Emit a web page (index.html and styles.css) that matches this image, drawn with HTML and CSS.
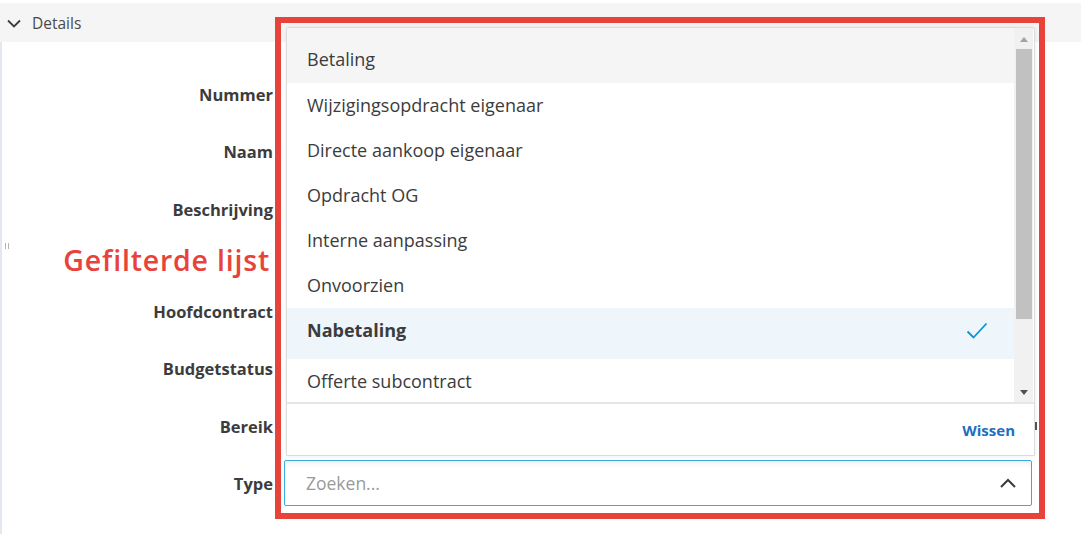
FILE: index.html
```html
<!DOCTYPE html>
<html lang="nl">
<head>
<meta charset="utf-8">
<title>Details</title>
<link rel="stylesheet" href="styles.css">
</head>
<body>
<div class="page">
  <div class="header">
    <svg class="chev" width="14" height="10" viewBox="0 0 14 10"><path d="M1 2.5 L7 8.5 L13 2.5" fill="none" stroke="#3c3c3c" stroke-width="1.8"/></svg>
    <span class="header-title">Details</span>
  </div>
  <div class="form">
    <span class="grip"><i></i><i></i></span>
    <div class="row"><div class="label">Nummer</div></div>
    <div class="row"><div class="label">Naam</div></div>
    <div class="row"><div class="label">Beschrijving</div></div>
    <div class="note-row"><div class="note">Gefilterde lijst</div></div>
    <div class="row"><div class="label">Hoofdcontract</div></div>
    <div class="row"><div class="label">Budgetstatus</div></div>
    <div class="row"><div class="label">Bereik</div><div class="field-edge"></div></div>
    <div class="row">
      <div class="label">Type</div>
      <div class="combo">
        <span class="placeholder">Zoeken...</span>
        <svg class="up" width="18" height="12" viewBox="0 0 18 12"><path d="M2 10 L9 3 L16 10" fill="none" stroke="#3c3c3c" stroke-width="2"/></svg>
      </div>
    </div>
  </div>

  <div class="popup">
    <div class="list-wrap">
      <ul class="list">
        <li class="item first hover">Betaling</li>
        <li class="item">Wijzigingsopdracht eigenaar</li>
        <li class="item">Directe aankoop eigenaar</li>
        <li class="item">Opdracht OG</li>
        <li class="item">Interne aanpassing</li>
        <li class="item">Onvoorzien</li>
        <li class="item selected">Nabetaling
          <svg class="check" width="22" height="18" viewBox="0 0 22 18"><path d="M1.5 9.5 L7.5 15.5 L20.5 1.5" fill="none" stroke="#0696d7" stroke-width="1.8"/></svg>
        </li>
        <li class="item">Offerte subcontract</li>
      </ul>
      <div class="scrollbar">
        <span class="arrow-up"></span>
        <span class="thumb"></span>
        <span class="arrow-down"></span>
      </div>
    </div>
    <div class="footer"><a class="clear">Wissen</a></div>
  </div>

  <div class="annot-box"></div>
</div>
</body>
</html>
```

FILE: styles.css
```css
* { box-sizing: border-box; }
html, body { margin: 0; padding: 0; }
body {
  background: #ffffff;
  font-family: "Open Sans", "Noto Sans", sans-serif;
  color: #3c3c3c;
  width: 1081px;
  height: 534px;
  overflow: hidden;
}
.page {
  position: relative;
  width: 1081px;
  height: 534px;
  padding-top: 3px;
}
.header {
  height: 39px;
  background: #f5f5f5;
  display: flex;
  align-items: center;
  padding-left: 7px;
  gap: 11px;
}
.chev { display: block; margin-top: 0; }
.header-title {
  font-size: 15.5px;
  color: #4a4a4a;
  font-weight: 500;
}
.form {
  position: relative;
  border-left: 2px solid #e3e8ee;
  height: 492px;
  padding-top: 24px;
}
.grip {
  position: absolute;
  left: 3px;
  top: 201px;
  display: flex;
  gap: 2px;
}
.grip i {
  display: block;
  width: 1px;
  height: 6px;
  background: #b5b5b5;
}
.row {
  height: 57.3px;
  display: flex;
  align-items: center;
  gap: 11px;
  position: relative;
}
.label {
  width: 271px;
  text-align: right;
  font-weight: 700;
  font-size: 16.5px;
  color: #3c3c3c;
  letter-spacing: 0;
}
.note-row {
  height: 45px;
  display: flex;
  align-items: center;
}
.note {
  width: 268px;
  text-align: right;
  color: #e8433b;
  font-size: 28.5px;
  font-weight: 600;
  letter-spacing: 0.8px;
}
.field-edge {
  position: absolute;
  left: 1033px;
  top: 25px;
  width: 2px;
  height: 8px;
  background: #555;
}
.combo {
  width: 748px;
  height: 46px;
  border: 1.5px solid #38abdf;
  border-radius: 2px;
  box-shadow: inset 0 5px 6px -3px rgba(0,0,0,0.08);
  display: flex;
  align-items: center;
  justify-content: space-between;
  padding: 0 14px 0 21px;
  background: #fff;
}
.placeholder {
  font-size: 17.5px;
  color: #9a9a9a;
}
.up { display: block; }

.popup {
  position: absolute;
  left: 286px;
  top: 27px;
  width: 749px;
  height: 429px;
  background: #fff;
  border: 1px solid #dcdcdc;
  border-radius: 3px 3px 0 0;
  box-shadow: 0 0 4px rgba(0,0,0,0.08);
  display: flex;
  flex-direction: column;
  overflow: hidden;
}
.list-wrap {
  height: 376px;
  display: flex;
  border-bottom: 2px solid #e6e6e6;
}
.list {
  list-style: none;
  margin: 0;
  padding: 0;
  flex: 1;
  overflow: hidden;
}
.item {
  height: 45px;
  line-height: 45px;
  padding-left: 20px;
  font-size: 18px;
  color: #3c3c3c;
  position: relative;
}
.item.first {
  height: 55px;
  padding-top: 9px;
}
.item.hover { background: #f5f5f5; }
.item.selected {
  height: 51px;
  background: #eef6fc;
  font-weight: 700;
}
.check {
  position: absolute;
  right: 26px;
  top: 14px;
}
.scrollbar {
  width: 19px;
  background: #f1f1f1;
  position: relative;
  display: flex;
  flex-direction: column;
  align-items: center;
  margin-right: 1px;
}
.arrow-up {
  margin-top: 9px;
  width: 0; height: 0;
  border-left: 4px solid transparent;
  border-right: 4px solid transparent;
  border-bottom: 5px solid #a3a3a3;
}
.thumb {
  margin-top: 7px;
  width: 16px;
  height: 270px;
  background: #c1c1c1;
}
.arrow-down {
  margin-top: 71px;
  width: 0; height: 0;
  border-left: 4px solid transparent;
  border-right: 4px solid transparent;
  border-top: 5px solid #505050;
}
.footer {
  flex: 1;
  display: flex;
  align-items: center;
  justify-content: flex-end;
  padding-right: 19px;
  padding-bottom: 0;
}
.clear {
  color: #1a6fbf;
  font-weight: 700;
  font-size: 15px;
  cursor: pointer;
}
.annot-box {
  position: absolute;
  left: 275px;
  top: 17px;
  width: 770px;
  height: 502px;
  border: 6px solid #e8433b;
  pointer-events: none;
}
```
